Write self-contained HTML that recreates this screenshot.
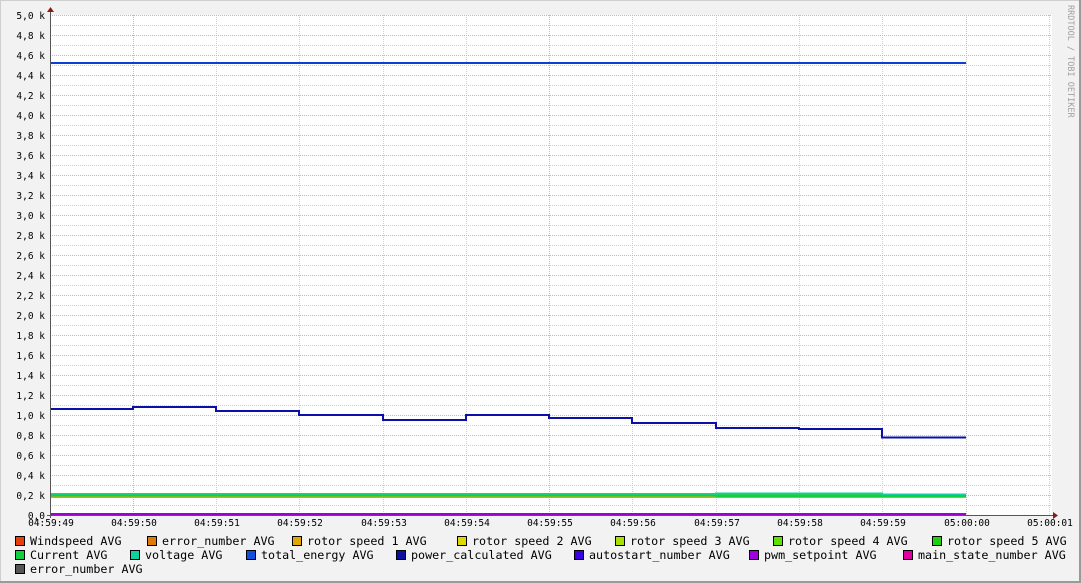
<!DOCTYPE html>
<html><head><style>
html,body{margin:0;padding:0;width:1081px;height:583px;overflow:hidden;background:#f2f2f2}
svg{display:block}
text{font-family:"DejaVu Sans Mono","Liberation Mono",monospace}
</style></head><body>
<svg width="1081" height="583" viewBox="0 0 1081 583" xmlns="http://www.w3.org/2000/svg">
<rect x="0" y="0" width="1081" height="583" fill="#f2f2f2"/>
<path d="M0 0.5H1081M0.5 0V583" stroke="#cfcfcf"/>
<path d="M0 582H1081M1080 0V583" stroke="#9a9a9a" stroke-width="2"/>
<rect x="50" y="15" width="1002" height="500" fill="#fff"/>
<g stroke="#cfcfcf" stroke-dasharray="1,1" stroke-width="1">
<path d="M50 25.5H1052M50 45.5H1052M50 65.5H1052M50 85.5H1052M50 105.5H1052M50 125.5H1052M50 145.5H1052M50 165.5H1052M50 185.5H1052M50 205.5H1052M50 225.5H1052M50 245.5H1052M50 265.5H1052M50 285.5H1052M50 305.5H1052M50 325.5H1052M50 345.5H1052M50 365.5H1052M50 385.5H1052M50 405.5H1052M50 425.5H1052M50 445.5H1052M50 465.5H1052M50 485.5H1052M50 505.5H1052"/>
<path d="M216.5 15V515M299.5 15V515M383.5 15V515M466.5 15V515M632.5 15V515M716.5 15V515M799.5 15V515M882.5 15V515M1049.5 15V515"/>
</g>
<g stroke="#e8a8a8" stroke-dasharray="1,1" stroke-width="1">
<path d="M50 15.5H1052M50 35.5H1052M50 55.5H1052M50 75.5H1052M50 95.5H1052M50 115.5H1052M50 135.5H1052M50 155.5H1052M50 175.5H1052M50 195.5H1052M50 215.5H1052M50 235.5H1052M50 255.5H1052M50 275.5H1052M50 295.5H1052M50 315.5H1052M50 335.5H1052M50 355.5H1052M50 375.5H1052M50 395.5H1052M50 415.5H1052M50 435.5H1052M50 455.5H1052M50 475.5H1052M50 495.5H1052"/>
<path d="M133.5 15V515M549.5 15V515M966.5 15V515"/>
</g>
<g font-size="9.5" fill="#000" text-anchor="end">
<text x="45" y="19">5,0 k</text><text x="45" y="39">4,8 k</text><text x="45" y="59">4,6 k</text><text x="45" y="79">4,4 k</text><text x="45" y="99">4,2 k</text><text x="45" y="119">4,0 k</text><text x="45" y="139">3,8 k</text><text x="45" y="159">3,6 k</text><text x="45" y="179">3,4 k</text><text x="45" y="199">3,2 k</text><text x="45" y="219">3,0 k</text><text x="45" y="239">2,8 k</text><text x="45" y="259">2,6 k</text><text x="45" y="279">2,4 k</text><text x="45" y="299">2,2 k</text><text x="45" y="319">2,0 k</text><text x="45" y="339">1,8 k</text><text x="45" y="359">1,6 k</text><text x="45" y="379">1,4 k</text><text x="45" y="399">1,2 k</text><text x="45" y="419">1,0 k</text><text x="45" y="439">0,8 k</text><text x="45" y="459">0,6 k</text><text x="45" y="479">0,4 k</text><text x="45" y="499">0,2 k</text><text x="45" y="519">0,0</text>
</g>
<g font-size="9.5" fill="#000" text-anchor="middle">
<text x="51" y="526">04:59:49</text><text x="134" y="526">04:59:50</text><text x="217" y="526">04:59:51</text><text x="300" y="526">04:59:52</text><text x="384" y="526">04:59:53</text><text x="467" y="526">04:59:54</text><text x="550" y="526">04:59:55</text><text x="633" y="526">04:59:56</text><text x="717" y="526">04:59:57</text><text x="800" y="526">04:59:58</text><text x="883" y="526">04:59:59</text><text x="967" y="526">05:00:00</text><text x="1050" y="526">05:00:01</text>
</g>
<!-- data -->
<path d="M50 63H966" stroke="#0a3fd8" stroke-width="2"/>
<path d="M50 497H966" stroke="#d8a800" stroke-width="2"/>
<path d="M50 495.5H966" stroke="#30d010" stroke-width="2"/>
<path d="M50 494H716V493.5H882V494.5H966" stroke="#10d0a0" stroke-width="2" fill="none"/>
<path d="M50 495.5H716M716 496H966" stroke="#10d040" stroke-width="2"/>
<path d="M50 409H133V407H216V411H299V415H383V420H466V415H549V418H632V423H716V428H799V429H882V437.5H966" stroke="#0a10a8" stroke-width="2" fill="none"/>
<path d="M50 514H966" stroke="#a000d8" stroke-width="2"/>
<!-- axes -->
<path d="M50.5 10V518" stroke="#555" stroke-width="1"/>
<path d="M47 515.5H1055" stroke="#555" stroke-width="1"/>
<path d="M47 12L50.5 7L54 12Z" fill="#8b1a1a"/>
<path d="M1053 512L1058 515.5L1053 519Z" fill="#8b1a1a"/>
<text transform="translate(1068,5) rotate(90)" font-size="8.5" fill="#a0a0a0">RRDTOOL / TOBI OETIKER</text>
<!-- legend -->
<g stroke="#000" stroke-width="1">
<rect x="15.5" y="536.5" width="9" height="9" fill="#e8400a"/>
<rect x="147.5" y="536.5" width="9" height="9" fill="#e07a0a"/>
<rect x="292.5" y="536.5" width="9" height="9" fill="#e0a800"/>
<rect x="457.5" y="536.5" width="9" height="9" fill="#e0d800"/>
<rect x="615.5" y="536.5" width="9" height="9" fill="#a8e000"/>
<rect x="773.5" y="536.5" width="9" height="9" fill="#60e000"/>
<rect x="932.5" y="536.5" width="9" height="9" fill="#20d010"/>
<rect x="15.5" y="550.5" width="9" height="9" fill="#10d040"/>
<rect x="130.5" y="550.5" width="9" height="9" fill="#10d0a0"/>
<rect x="246.5" y="550.5" width="9" height="9" fill="#1050e0"/>
<rect x="396.5" y="550.5" width="9" height="9" fill="#0a10a0"/>
<rect x="574.5" y="550.5" width="9" height="9" fill="#3a00e0"/>
<rect x="749.5" y="550.5" width="9" height="9" fill="#a000e0"/>
<rect x="903.5" y="550.5" width="9" height="9" fill="#e000a0"/>
<rect x="15.5" y="564.5" width="9" height="9" fill="#555"/>
</g>
<g font-size="11.7" fill="#000">
<text x="30" y="545">Windspeed AVG</text><text x="162" y="545">error_number AVG</text><text x="307" y="545">rotor speed 1 AVG</text><text x="472" y="545">rotor speed 2 AVG</text><text x="630" y="545">rotor speed 3 AVG</text><text x="788" y="545">rotor speed 4 AVG</text><text x="947" y="545">rotor speed 5 AVG</text>
<text x="30" y="559">Current AVG</text><text x="145" y="559">voltage AVG</text><text x="261" y="559">total_energy AVG</text><text x="411" y="559">power_calculated AVG</text><text x="589" y="559">autostart_number AVG</text><text x="764" y="559">pwm_setpoint AVG</text><text x="918" y="559">main_state_number AVG</text>
<text x="30" y="573">error_number AVG</text>
</g>
</svg>
</body></html>
